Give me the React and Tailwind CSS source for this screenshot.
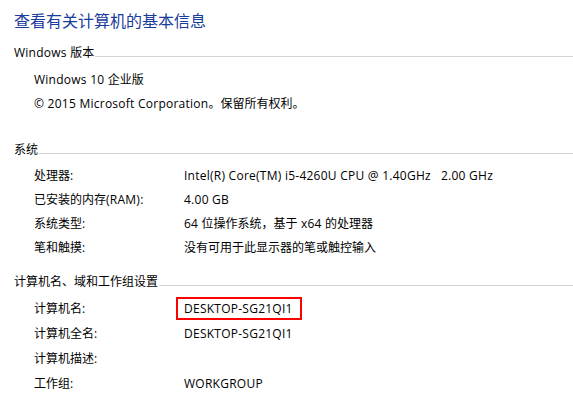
import React from "react";

const font = { fontFamily: '"Open Sans", "Noto Sans CJK SC", sans-serif' };

function T({ children }) {
  if (typeof children !== "string") return children;
  const parts = children.split(/([\u0020-\u024F]+)/).filter((p) => p !== "");
  return parts.map((p, i) =>
    /^[\u0020-\u024F]+$/.test(p) ? (
      <span key={i} className="tracking-[0.25px]">{p}</span>
    ) : (
      <span key={i}>{p}</span>
    )
  );
}

function Header({ children, className = "" }) {
  return (
    <div className={"flex h-[24px] items-center " + className}>
      <span className="whitespace-nowrap text-[12px] leading-[24px] text-black"><T>{children}</T></span>
      <div className="mt-[6px] ml-[1px] h-px flex-1 bg-[#d4d4d4]" />
    </div>
  );
}

function Row({ label, value, boxed, h = "h-[24px]" }) {
  return (
    <div className={"flex items-center pl-[20px] text-[12px] text-black " + h}>
      <div className="w-[150px] shrink-0 whitespace-nowrap"><T>{label}</T></div>
      {boxed ? (
        <div className="-ml-[8px] flex h-[23px] w-[126px] items-center border-2 border-[#ff0000] pl-[6px] whitespace-nowrap">
          <T>{value}</T>
        </div>
      ) : (
        <div className="whitespace-pre"><T>{value}</T></div>
      )}
    </div>
  );
}

export default function App() {
  return (
    <div className="h-[410px] w-[573px] overflow-hidden bg-white pl-[14px] pt-[9px]" style={font}>
      <div className="h-[24px] text-[16px] leading-[24px] text-[#1a3c9c]">查看有关计算机的基本信息</div>
      <Header className="mt-[8px]">Windows 版本</Header>
      <div className="mt-[3px]">
        <Row label="Windows 10 企业版" value="" />
        <Row label="© 2015 Microsoft Corporation。保留所有权利。" value="" />
      </div>
      <Header className="mt-[22px]">系统</Header>
      <div className="mt-[2px]">
        <Row label="处理器:" value="Intel(R) Core(TM) i5-4260U CPU @ 1.40GHz   2.00 GHz" />
        <Row label="已安装的内存(RAM):" value="4.00 GB" />
        <Row label="系统类型:" value="64 位操作系统，基于 x64 的处理器" />
        <Row label="笔和触摸:" value="没有可用于此显示器的笔或触控输入" />
      </div>
      <Header className="mt-[10px]">计算机名、域和工作组设置</Header>
      <div className="mt-[2px]">
        <Row label="计算机名:" value="DESKTOP-SG21QI1" boxed h="h-[25px]" />
        <Row label="计算机全名:" value="DESKTOP-SG21QI1" h="h-[25px]" />
        <Row label="计算机描述:" value="" h="h-[25px]" />
        <Row label="工作组:" value="WORKGROUP" h="h-[25px]" />
      </div>
    </div>
  );
}
